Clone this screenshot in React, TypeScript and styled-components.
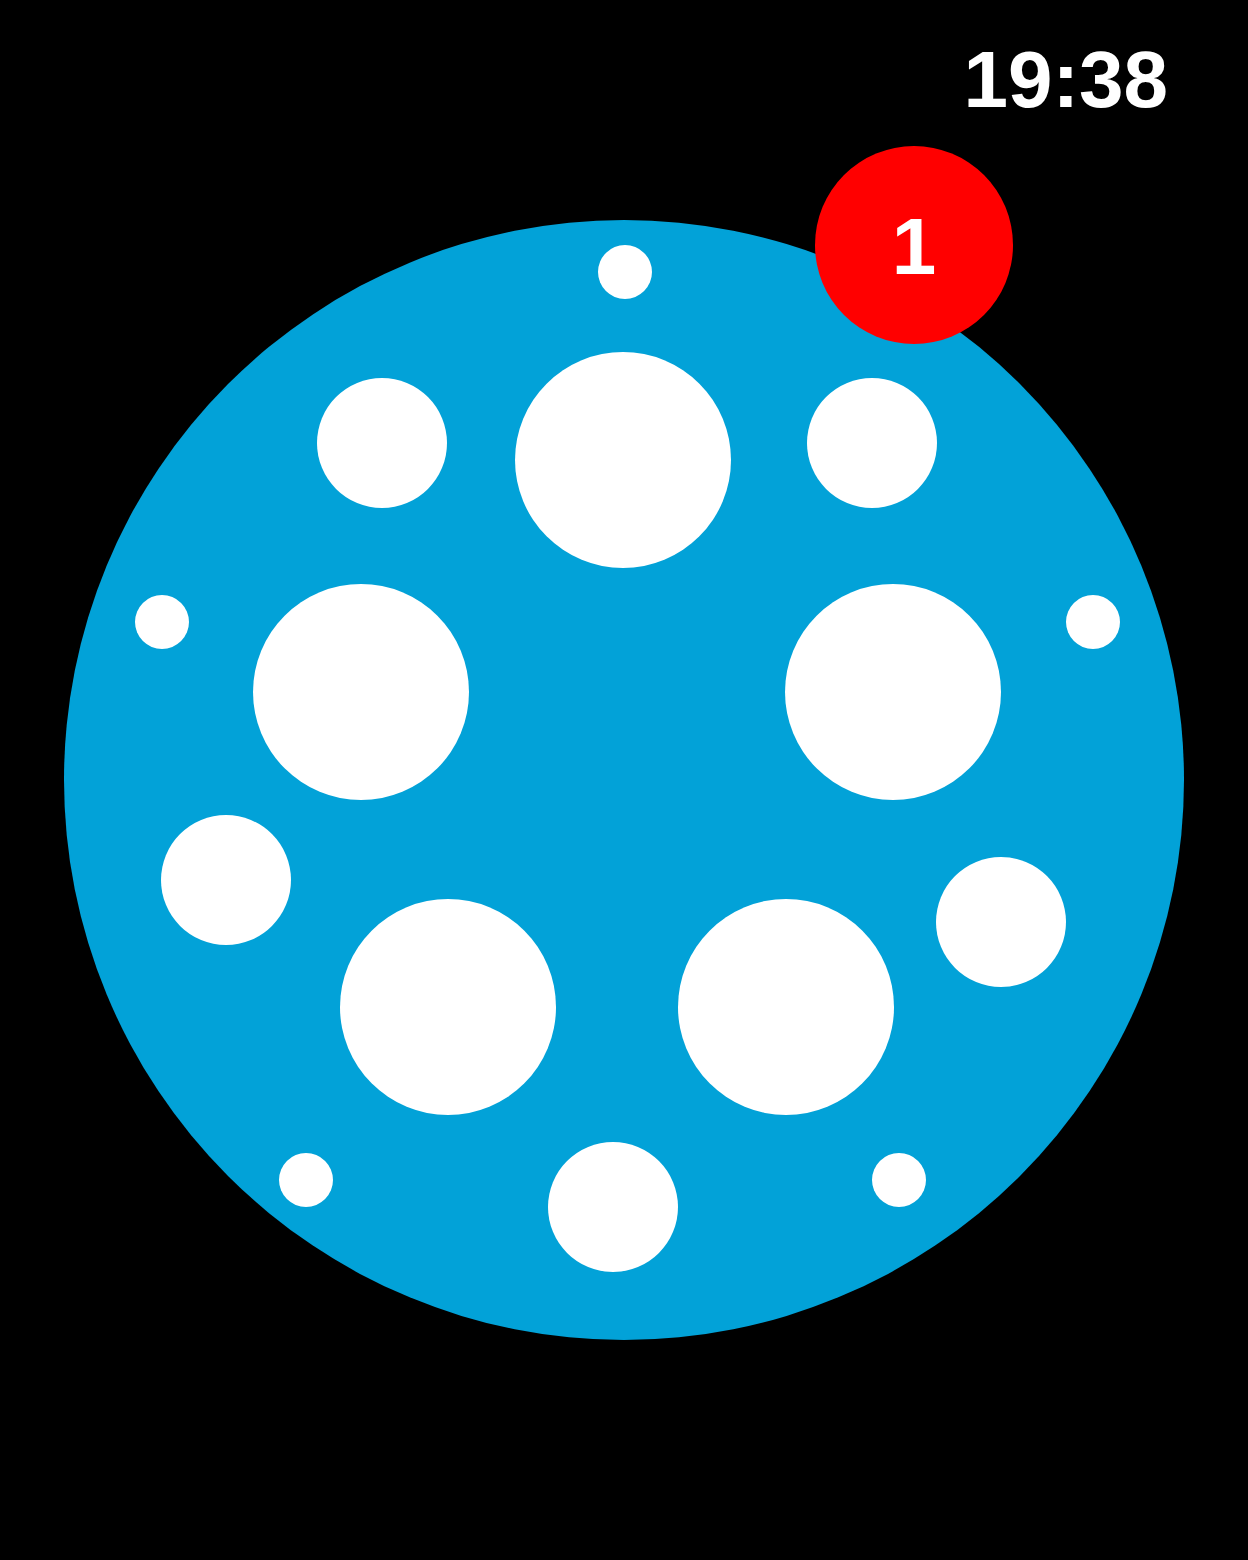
import styled, { createGlobalStyle } from "styled-components";

const GlobalStyle = createGlobalStyle`
  html, body {
    margin: 0;
    padding: 0;
    background: #000;
  }
  body {
    font-family: "Liberation Sans", Arial, sans-serif;
  }
`;

// dot centres and radii, in disc coordinates
const dots = [
  { x: 561, y: 52, r: 27 },
  { x: 559, y: 240, r: 108 },
  { x: 318, y: 223, r: 65 },
  { x: 808, y: 223, r: 65 },
  { x: 98, y: 402, r: 27 },
  { x: 1029, y: 402, r: 27 },
  { x: 297, y: 472, r: 108 },
  { x: 829, y: 472, r: 108 },
  { x: 162, y: 660, r: 65 },
  { x: 937, y: 702, r: 65 },
  { x: 384, y: 787, r: 108 },
  { x: 722, y: 787, r: 108 },
  { x: 242, y: 960, r: 27 },
  { x: 549, y: 987, r: 65 },
  { x: 835, y: 960, r: 27 },
];

function App() {
  return (
    <>
      <GlobalStyle />
      <Screen>
        <StatusBar>
          <Clock>19:38</Clock>
        </StatusBar>
        <Disc>
          {dots.map((d, i) => (
            <Dot
              key={i}
              style={{ left: d.x - d.r, top: d.y - d.r, width: d.r * 2, height: d.r * 2 }}
            />
          ))}
          <Badge>1</Badge>
        </Disc>
      </Screen>
    </>
  );
}

export default App;

const Screen = styled.div`
  width: 1248px;
  height: 1560px;
  background: #000;
  display: flex;
  flex-direction: column;
  align-items: center;
  overflow: hidden;
`;

const StatusBar = styled.div`
  align-self: stretch;
  display: flex;
  justify-content: flex-end;
  padding: 40px 80px 0 0;
`;

const Clock = styled.span`
  color: #fff;
  font-size: 80px;
  font-weight: 700;
  line-height: 1;
`;

const Disc = styled.div`
  position: relative;
  margin-top: 100px;
  width: 1120px;
  height: 1120px;
  border-radius: 50%;
  background: #02a2d8;
`;

const Dot = styled.div`
  position: absolute;
  border-radius: 50%;
  background: #fff;
`;

const Badge = styled.div`
  position: absolute;
  left: 751px;
  top: -74px;
  width: 198px;
  height: 198px;
  box-sizing: border-box;
  padding-top: 4px;
  border-radius: 50%;
  background: #ff0000;
  color: #fff;
  font-size: 80px;
  font-weight: 700;
  line-height: 1;
  display: flex;
  align-items: center;
  justify-content: center;
`;
